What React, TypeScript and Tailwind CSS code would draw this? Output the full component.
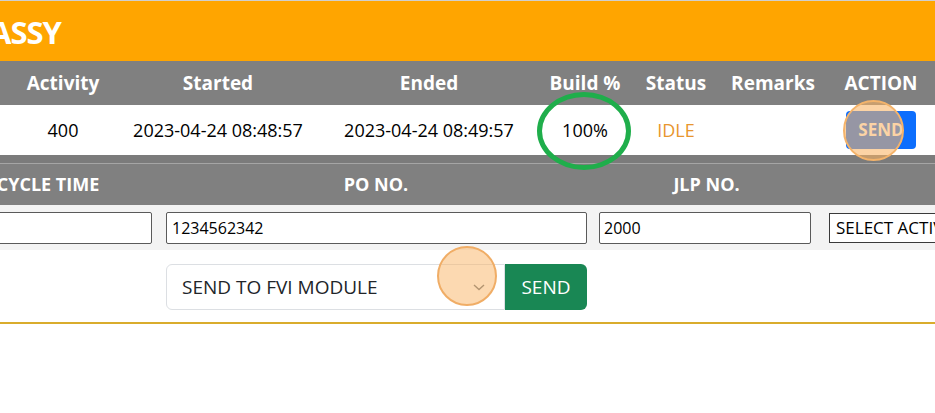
import React from "react";

export default function App() {
  return (
    <div className="relative w-[935px] h-[413px] overflow-hidden bg-white font-['Open_Sans',sans-serif]">
      <div className="h-[1px] bg-[#cfcfcf]" />
      <div className="h-[60px] bg-[#ffa500] flex items-center">
        <span className="-ml-[10px] mt-[2px] text-white font-bold text-[31px] tracking-[-1px] leading-none">ASSY</span>
      </div>
      {/* header row */}
      <div className="h-[44px] bg-[#808080] flex items-center text-white font-bold text-[19px]">
        <div className="w-[126px] shrink-0 text-center">Activity</div>
        <div className="w-[184px] shrink-0 text-center">Started</div>
        <div className="w-[238px] shrink-0 text-center">Ended</div>
        <div className="w-[74px] shrink-0 text-center whitespace-nowrap">Build %</div>
        <div className="w-[108px] shrink-0 text-center">Status</div>
        <div className="w-[86px] shrink-0 text-center whitespace-nowrap">Remarks</div>
        <div className="w-[130px] shrink-0 text-center">ACTION</div>
      </div>
      {/* data row */}
      <div className="h-[50px] bg-white flex items-center text-[18px] text-black">
        <div className="w-[126px] shrink-0 text-center">400</div>
        <div className="w-[184px] shrink-0 text-center whitespace-nowrap">2023-04-24 08:48:57</div>
        <div className="w-[238px] shrink-0 text-center whitespace-nowrap">2023-04-24 08:49:57</div>
        <div className="w-[74px] shrink-0 text-center">100%</div>
        <div className="w-[108px] shrink-0 text-center text-[#e8962e]">IDLE</div>
        <div className="w-[86px] shrink-0" />
        <div className="w-[119px] shrink-0 flex justify-start pl-[30px]">
          <button className="w-[70px] h-[38px] rounded-[4px] bg-[#0d6efd] text-white font-bold text-[17px]">SEND</button>
        </div>
      </div>
      <div className="h-[8px] bg-[#7b7b7b]" />
      <div className="h-[1px] bg-[#a5a5a5]" />
      {/* second header */}
      <div className="h-[41px] bg-[#808080] flex items-center text-white font-bold text-[18px]">
        <div className="w-[222px] -ml-[63px] shrink-0 text-center whitespace-nowrap">CYCLE TIME</div>
        <div className="w-[434px] shrink-0 text-center">PO NO.</div>
        <div className="w-[227px] shrink-0 text-center">JLP NO.</div>
        <div className="flex-1" />
      </div>
      {/* inputs row */}
      <div className="h-[45px] bg-[#f3f3f3] flex items-center text-[16px] text-black">
        <div className="w-[222px] -ml-[63px] shrink-0 pl-[7px] pr-[7px]">
          <div className="h-[32px] bg-white border border-[#5a5a5a] rounded-[2px]" />
        </div>
        <div className="w-[434px] shrink-0 pl-[7px] pr-[6px]">
          <div className="h-[32px] bg-white border border-[#5a5a5a] rounded-[2px] flex items-center px-[5px]">1234562342</div>
        </div>
        <div className="w-[227px] shrink-0 pl-[6px] pr-[9px]">
          <div className="h-[32px] bg-white border border-[#5a5a5a] rounded-[2px] flex items-center px-[4px]">2000</div>
        </div>
        <div className="flex-1 pl-[9px] overflow-hidden">
          <div className="h-[30px] w-[140px] bg-white border border-[#3a3a3a] flex items-center px-[6px] whitespace-nowrap overflow-hidden text-[17px]">SELECT ACTIVITY</div>
        </div>
      </div>
      {/* send row */}
      <div className="h-[74px] border-b-2 border-[#d9ac2c] flex items-start pt-[14px] pl-[166px]">
        <div className="w-[339px] h-[46px] border border-[#dcdfe3] rounded-l-[6px] flex items-center pl-[15px] pr-[18px] text-[19px] text-[#212529]">
          <span className="flex-1 whitespace-nowrap">SEND TO FVI MODULE</span>
          <svg width="14" height="10" viewBox="0 0 14 10" fill="none">
            <path d="M2 3 L7 7.5 L12 3" stroke="#6c757d" strokeWidth="1.4" />
          </svg>
        </div>
        <button className="w-[82px] h-[46px] bg-[#198754] rounded-r-[6px] text-white text-[19px]">SEND</button>
      </div>
      {/* overlays */}
      <div className="absolute left-[537px] top-[92px] w-[94px] h-[78px] rounded-[50%] border-[5px] border-[#1fae4b]" />
      <div className="absolute left-[843px] top-[100px] w-[61px] h-[61px] rounded-full bg-[rgba(250,180,100,0.58)] border-2 border-[#f4b36a]" />
      <div className="absolute left-[437px] top-[246px] w-[60px] h-[60px] rounded-full bg-[rgba(250,180,100,0.5)] border-2 border-[#f0ad66]" />
    </div>
  );
}
